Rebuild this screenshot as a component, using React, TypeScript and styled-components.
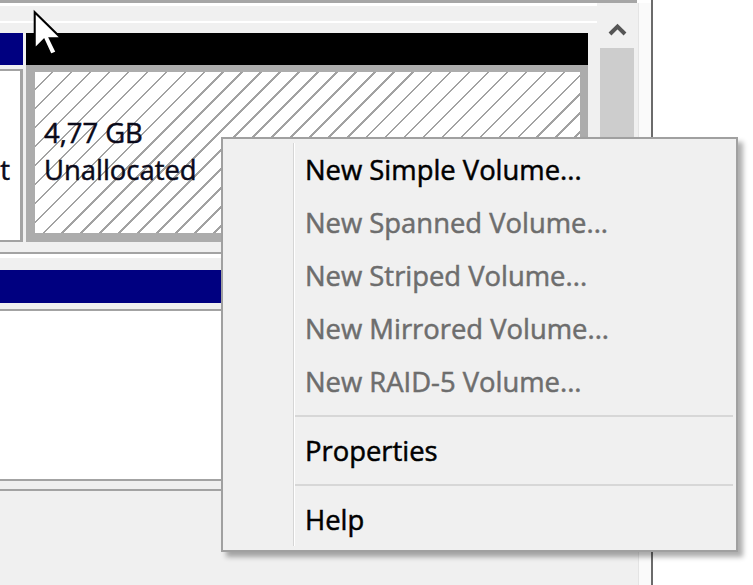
import styled, { createGlobalStyle } from "styled-components";

const GlobalStyle = createGlobalStyle`
  html, body {
    margin: 0;
    padding: 0;
    background: #fff;
  }
  body {
    font-family: "Open Sans", "Noto Sans", "Liberation Sans", sans-serif;
  }
`;

type MenuEntry = { label: string; disabled?: boolean } | "separator";

const menuEntries: MenuEntry[] = [
  { label: "New Simple Volume..." },
  { label: "New Spanned Volume...", disabled: true },
  { label: "New Striped Volume...", disabled: true },
  { label: "New Mirrored Volume...", disabled: true },
  { label: "New RAID-5 Volume...", disabled: true },
  "separator",
  { label: "Properties" },
  "separator",
  { label: "Help" },
];

export default function App() {
  return (
    <>
      <GlobalStyle />
      <Screen>
        <Window>
          <UpperPaneEdge />
          <GraphArea>
            <DiskView>
              <TopGap />
              <DiskRow $height={209}>
                <Partition $width={23}>
                  <Header $color="#000080" />
                  <PlainBody>
                    <Label $align="right">
                      <span>&nbsp;</span>
                      <span>t</span>
                    </Label>
                  </PlainBody>
                </Partition>
                <Partition $width={562} $gap={3}>
                  <Header $color="#000" />
                  <SelectedFrame>
                    <Hatch>
                      <Label $align="left">
                        <span>4,77 GB</span>
                        <span>Unallocated</span>
                      </Label>
                    </Hatch>
                  </SelectedFrame>
                </Partition>
              </DiskRow>
              <MidGap />
              <DiskRow $height={211}>
                <Partition $width={588}>
                  <Header $color="#000080" $height={33} />
                  <WideBody />
                </Partition>
              </DiskRow>
              <BottomRule />
            </DiskView>
            <Scrollbar>
              <ArrowButton>
                <svg width="19" height="13" viewBox="0 0 19 13">
                  <polyline
                    points="2,11 9.5,3.5 17,11"
                    fill="none"
                    stroke="#555"
                    strokeWidth="4"
                  />
                </svg>
              </ArrowButton>
              <Thumb />
            </Scrollbar>
            <Strip />
          </GraphArea>
        </Window>

        <Menu>
          <Gutter />
          <Items>
            {menuEntries.map((entry, i) =>
              entry === "separator" ? (
                <Separator key={i}>
                  <SeparatorLine />
                </Separator>
              ) : (
                <Item key={entry.label} $disabled={entry.disabled}>
                  {entry.label}
                </Item>
              )
            )}
          </Items>
        </Menu>

        <Cursor width="34" height="48" viewBox="0 0 14.5 21">
          <path
            d="M1 1 L1 17 L5 13 L8 19.6 L10.6 18.5 L7.6 12.4 L12.6 12.4 Z"
            fill="#fff"
            stroke="#000"
            strokeWidth="0.9"
            strokeLinejoin="miter"
          />
        </Cursor>
      </Screen>
    </>
  );
}

const Screen = styled.div`
  position: relative;
  width: 753px;
  height: 585px;
  overflow: hidden;
  display: flex;
  background: #fff;
`;

const Window = styled.div`
  width: 651px;
  height: 100%;
  border-right: 2px solid #6b6b6b;
  display: flex;
  flex-direction: column;
  background: #fff;
`;

const UpperPaneEdge = styled.div`
  width: 637px;
  height: 3px;
  flex-shrink: 0;
  background: #a6a6a6;
`;

const GraphArea = styled.div`
  flex: 1;
  display: flex;
`;

const DiskView = styled.div`
  width: 597px;
  background: #f0f0f0;
  display: flex;
  flex-direction: column;
`;

const TopGap = styled.div`
  height: 30px;
  background: linear-gradient(
    #fff 0 3px,
    #f0f0f0 3px 18px,
    #fff 18px 20px,
    #f0f0f0 20px
  );
`;

const MidGap = styled.div`
  height: 28px;
  background: linear-gradient(
    #f0f0f0 0 10px,
    #a3a3a3 10px 12px,
    #fff 12px 16px,
    #f0f0f0 16px
  );
`;

const DiskRow = styled.div<{ $height: number }>`
  height: ${(p) => p.$height}px;
  display: flex;
  flex-shrink: 0;
`;

const Partition = styled.div<{ $width: number; $gap?: number }>`
  width: ${(p) => p.$width}px;
  margin-left: ${(p) => p.$gap ?? 0}px;
  display: flex;
  flex-direction: column;
  overflow: hidden;
`;

const Header = styled.div<{ $color: string; $height?: number }>`
  height: ${(p) => p.$height ?? 32}px;
  flex-shrink: 0;
  background: ${(p) => p.$color};
`;

const PlainBody = styled.div`
  flex: 1;
  margin-top: 4px;
  background: #fff;
  border-top: 2px solid #a3a3a3;
  border-bottom: 2px solid #a3a3a3;
  border-right: 3px solid #a3a3a3;
  overflow: hidden;
`;

const WideBody = styled.div`
  flex: 1;
  margin-top: 6px;
  background: #fff;
  border-top: 2px solid #a3a3a3;
  border-bottom: 2px solid #a3a3a3;
`;

const BottomRule = styled.div`
  height: 2px;
  margin-top: 8px;
  width: 588px;
  background: #a3a3a3;
`;

const SelectedFrame = styled.div`
  flex: 1;
  display: flex;
  padding: 7px 8px 9px 9px;
  background: #acacac;
`;

const Hatch = styled.div`
  flex: 1;
  background: repeating-linear-gradient(
    135deg,
    #fff 0 11.6px,
    #a2a2a2 11.6px 13.4px
  );
`;

const Label = styled.div<{ $align: "left" | "right" }>`
  display: flex;
  flex-direction: column;
  align-items: ${(p) => (p.$align === "right" ? "flex-end" : "flex-start")};
  padding: ${(p) => (p.$align === "right" ? "43px 10px 0 0" : "42px 0 0 9px")};
  font-size: 27.4px;
  line-height: 37px;
  color: #0a0a1a;
  -webkit-text-stroke: 0.5px currentColor;
  white-space: nowrap;
`;

const Scrollbar = styled.div`
  width: 41px;
  background: #f0f0f0;
  display: flex;
  flex-direction: column;
`;

const ArrowButton = styled.div`
  height: 45px;
  box-sizing: border-box;
  padding-top: 20px;
  display: flex;
  align-items: flex-start;
  justify-content: center;
`;

const Thumb = styled.div`
  height: 220px;
  width: 34px;
  margin-left: 3px;
  background: #cdcdcd;
`;

const Strip = styled.div`
  width: 12px;
  background: #fafafa;
  border-left: 1px solid #e4e4e4;
`;

const Menu = styled.div`
  position: absolute;
  left: 221px;
  top: 137px;
  width: 517px;
  height: 415px;
  box-sizing: border-box;
  display: flex;
  padding: 4px 0;
  background: #f0f0f0;
  border: 2px solid #a0a0a0;
  box-shadow: 5px 5px 5px rgba(0, 0, 0, 0.32);
`;

const Gutter = styled.div`
  width: 70px;
  flex-shrink: 0;
`;

const Items = styled.div`
  flex: 1;
  display: flex;
  flex-direction: column;
  border-left: 1px solid #d5d5d5;
  box-shadow: inset 1px 0 0 #fff;
  padding-left: 1px;
`;

const Item = styled.div<{ $disabled?: boolean }>`
  height: 53px;
  display: flex;
  align-items: center;
  padding-left: 10px;
  font-size: 27.4px;
  color: ${(p) => (p.$disabled ? "#6d6d6d" : "#000")};
  -webkit-text-stroke: 0.5px currentColor;
  white-space: nowrap;
`;

const Separator = styled.div`
  height: 16px;
  display: flex;
  align-items: center;
  padding-right: 3px;
`;

const SeparatorLine = styled.div`
  flex: 1;
  height: 2px;
  background: #d7d7d7;
`;

const Cursor = styled.svg`
  position: absolute;
  left: 32px;
  top: 10px;
  overflow: visible;
`;
